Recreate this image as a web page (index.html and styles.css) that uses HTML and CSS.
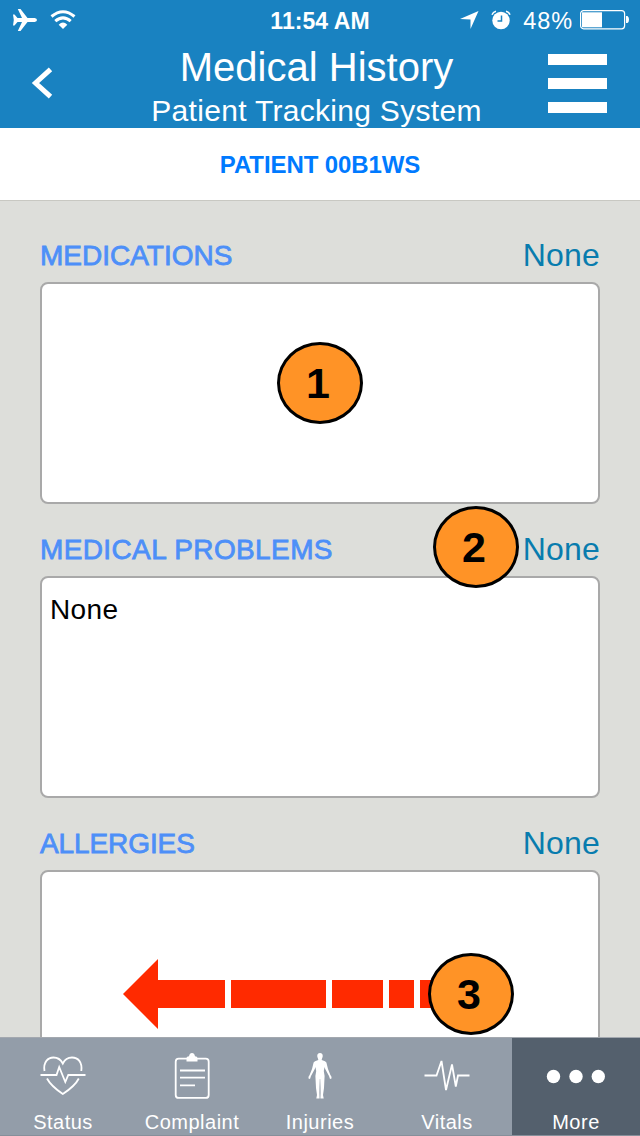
FILE: index.html
```html
<!DOCTYPE html>
<html lang="en">
<head>
<meta charset="utf-8">
<title>Medical History</title>
<link rel="stylesheet" href="styles.css">
</head>
<body>
<div class="screen">
  <header class="header">
    <div class="status-bar">
      <div class="status-left">
        <svg class="plane" width="24" height="22" viewBox="0 0 24 22"><path d="M0 5.500h1.500L4.500 9H9L4.800 0h2.700L14.500 9h7.200Q24 9.400 24 11t-2.300 2H14.500L7.500 22H4.800L9 13H4.500L1.500 16.500H0L.8 11Z"/></svg>
        <svg class="wifi" width="26" height="20" viewBox="0 0 26 20"><g class="wifi-arc"><path d="M1.500 6.500Q13-3 24.500 6.500"/><path d="M5.300 11.200Q13 4.500 20.700 11.200"/></g><path d="M8.700 14.700Q13 10.500 17.300 14.700L13 19Z"/></svg>
      </div>
      <div class="time">11:54 AM</div>
      <div class="status-right">
        <svg class="location" width="19" height="19" viewBox="0 0 19 19"><path d="M18.500 0 10.500 18V8.500L0 8Z"/></svg>
        <svg class="alarm" width="20" height="20" viewBox="0 0 20 20"><circle cx="10" cy="10.500" r="8.700"/><path class="bell" d="M1 4.800Q2 2 5 1.300M15 1.300Q18 2 19 4.800"/><path class="hands" d="M10.500 5.500V11H6.500"/></svg>
        <span class="percent">48%</span>
        <svg class="battery" width="50" height="20" viewBox="0 0 50 20"><rect class="shell" x=".6" y=".6" width="44" height="18.200" rx="3"/><rect x="2" y="2.300" width="20" height="15"/><path d="M46 6h1.500q1.500 1 1.500 3.500T47.500 13H46Z"/></svg>
      </div>
    </div>
    <div class="nav">
      <svg class="back" width="22" height="32" viewBox="0 0 22 32"><path d="M19.500 2.300 4.500 16l15 13.700"/></svg>
      <div class="titles">
        <h1 class="title">Medical History</h1>
        <div class="subtitle">Patient Tracking System</div>
      </div>
      <div class="menu"><i class="bar"></i><i class="bar"></i><i class="bar"></i></div>
    </div>
  </header>
  <div class="patient"><span class="patient-id">PATIENT 00B1WS</span></div>
  <main class="content">
    <section class="field">
      <div class="field-head"><h2 class="label">MEDICATIONS</h2><span class="none">None</span></div>
      <div class="box"></div>
      <div class="callout one">1</div>
    </section>
    <section class="field">
      <div class="field-head"><h2 class="label problems">MEDICAL PROBLEMS</h2><span class="none">None</span></div>
      <div class="box">None</div>
      <div class="callout two">2</div>
    </section>
    <section class="field">
      <div class="field-head"><h2 class="label allergies">ALLERGIES</h2><span class="none">None</span></div>
      <div class="box"></div>
      <svg class="arrow" width="320" height="70" viewBox="0 0 320 70"><path d="M0 35 35 0V21H102V49H35V70ZM108 21h95v28h-95ZM209 21h51v28h-51ZM266 21h25v28h-25ZM297 21h23v28h-23Z"/></svg>
      <div class="callout three">3</div>
    </section>
  </main>
  <nav class="tabs">
    <div class="tab shifted">
      <svg class="icon line" width="46" height="46" viewBox="0 0 46 46"><path d="M4.500 18C3 9 8 4.500 13.500 4.500c4 0 7.500 2.500 9.300 6C24.500 7 28 4.500 32 4.500c6 0 10.500 4.500 9.300 13.500M.5 22h16L19.200 14l6.100 15 3-7H45.500M7 25.500Q11 33 22.800 41 35 33 38.800 25.500"/></svg>
      <span class="tab-name">Status</span>
    </div>
    <div class="tab">
      <svg class="icon line" width="46" height="46" viewBox="0 0 46 46"><rect x="6.700" y="5.700" width="33" height="39.200" rx="3"/><path d="M11 17.500H36M11 24.700H36M11 32.300H26"/><path class="fill" d="M17.500 8.500V5Q17.500 3.500 20 3.300 20.700 0 23 0T26 3.300Q28.500 3.500 28.500 5V8.500Z"/></svg>
      <span class="tab-name">Complaint</span>
    </div>
    <div class="tab">
      <svg class="icon" width="46" height="46" viewBox="0 0 46 46"><path d="M23 0C25 0 26 1.500 25.700 3.500 25.400 5 24.800 5.500 24.700 7L28 8.200Q29.800 8.800 30 12L31 16 33.400 22Q35 23.500 34.500 25.500L33 26 32 23 28.200 16 27.600 14 26.800 18 27.600 23 27.200 31 27 35 26 42 26.700 45.500H23.400L23.600 40 23.500 34 23.200 26H22.800L22.500 34 22.400 40 22.600 45.500H19.300L20 42 19 35 18.800 31 18.400 23 19.200 18 18.400 14 17.800 16 14 23 13 26 11.500 25.500Q11 23.500 12.600 22L15 16 16 12Q16.200 8.800 18 8.200L21.300 7C21.200 5.500 20.600 5 20.300 3.500 20 1.500 21 0 23 0Z"/></svg>
      <span class="tab-name">Injuries</span>
    </div>
    <div class="tab shifted">
      <svg class="icon line" width="46" height="46" viewBox="0 0 46 46"><path d="M.5 22.500H12.500L17.500 8 22 37 28 11.500 31.800 33.500 34 22.500H45.500"/></svg>
      <span class="tab-name">Vitals</span>
    </div>
    <div class="tab active">
      <svg class="icon" width="60" height="46" viewBox="0 0 60 46"><circle cx="7.500" cy="23.500" r="6.700"/><circle cx="30" cy="23.500" r="6.700"/><circle cx="52.300" cy="23.500" r="6.700"/></svg>
      <span class="tab-name">More</span>
    </div>
  </nav>
</div>
</body>
</html>
```
FILE: styles.css
```css
* { box-sizing: border-box; }
body { margin: 0; font-family: "Liberation Sans", Arial, sans-serif; }
h1, h2 { margin: 0; font-weight: 400; }
svg { display: block; fill: #fff; flex: none; }

.screen { width: 640px; height: 1136px; display: flex; flex-direction: column; overflow: hidden; background: #dddeda; }

.header { height: 128px; flex: none; background: #1982c1; color: #fff; }
.status-bar { height: 40px; display: grid; grid-template-columns: 1fr 102px 1fr; align-items: center; }
.status-left { display: flex; align-items: center; gap: 13px; padding-left: 13px; }
.wifi-arc { fill: none; stroke: #fff; stroke-width: 3; }
.time { font-size: 23px; font-weight: 700; line-height: 26px; white-space: nowrap; padding-top: 2px; text-align: center; letter-spacing: .05px; }
.status-right { display: flex; align-items: center; justify-content: flex-end; padding-right: 10px; }
.location { margin-right: 12px; }
.alarm { margin-right: 12px; }
.bell { fill: none; stroke: #fff; stroke-width: 1.5; }
.hands { fill: none; stroke: #1982c1; stroke-width: 1.5; }
.percent { font-size: 23.500px; line-height: 26px; letter-spacing: .9px; margin-right: 7px; padding-top: 2px; }
.shell { fill: none; stroke: #fff; stroke-width: 1.2; }
.nav { height: 88px; display: flex; align-items: flex-start; justify-content: space-between; padding: 0 33px 0 31px; }
.back { margin-top: 27px; fill: none; stroke: #fff; stroke-width: 5; }
.titles { display: flex; flex-direction: column; align-items: center; padding-left: 32px; }
.title { font-size: 40px; line-height: 46px; padding-top: 4px; white-space: nowrap; }
.subtitle { font-size: 30px; line-height: 34px; margin-top: 4px; white-space: nowrap; letter-spacing: .3px; }
.menu { width: 59px; padding-top: 14px; display: flex; flex-direction: column; gap: 13px; }
.bar { height: 11px; background: #fff; }

.patient { height: 73px; flex: none; display: flex; align-items: center; justify-content: center; background: #fff; border-bottom: 1px solid #c8c8c2; }
.patient-id { color: #007aff; font-size: 24px; font-weight: 700; line-height: 28px; padding-top: 2px; letter-spacing: -.1px; }

.content { flex: 1; min-height: 0; overflow: hidden; padding: 35px 40px 0; }
.field { height: 294px; position: relative; }
.field-head { height: 46px; display: flex; justify-content: space-between; align-items: flex-start; }
.label { font-size: 28px; line-height: 38px; padding-top: 1px; color: #4d8ff8; -webkit-text-stroke: .8px #4d8ff8; }
.problems { letter-spacing: .38px; }
.allergies { letter-spacing: -.1px; }
.none { font-size: 32px; line-height: 38px; color: #087cae; letter-spacing: .2px; }
.box { height: 222px; border: 2px solid #a9a9a9; border-radius: 8px; background: #fff; padding: 16px 8px; font-size: 28px; line-height: 32px; letter-spacing: .4px; color: #000; }
.callout { position: absolute; width: 86px; height: 82px; border: 3px solid #000; border-radius: 50%; background: #ff9326; display: flex; align-items: center; justify-content: center; font-size: 43px; line-height: 48px; font-weight: 700; padding-right: 4px; }
.one { left: 237px; top: 106px; }
.two { left: 393px; top: -24px; }
.three { left: 388px; top: 129px; }
.arrow { position: absolute; left: 83px; top: 135px; fill: #ff2a00; }

.tabs { height: 99px; flex: none; display: grid; grid-template-columns: repeat(5, 1fr); background: #939da9; border-top: 1px solid #a3a8af; border-bottom: 1px solid #858f9a; }
.tab { display: flex; flex-direction: column; align-items: center; padding-top: 15px; color: #fff; }
.shifted { padding-right: 2px; }
.active { background: #54606d; }
.line { fill: none; stroke: #fff; stroke-width: 1.8; stroke-linejoin: miter; }
.fill { fill: #fff; stroke: none; }
.tab-name { font-size: 20px; line-height: 24px; margin-top: 11px; letter-spacing: .5px; }
```
